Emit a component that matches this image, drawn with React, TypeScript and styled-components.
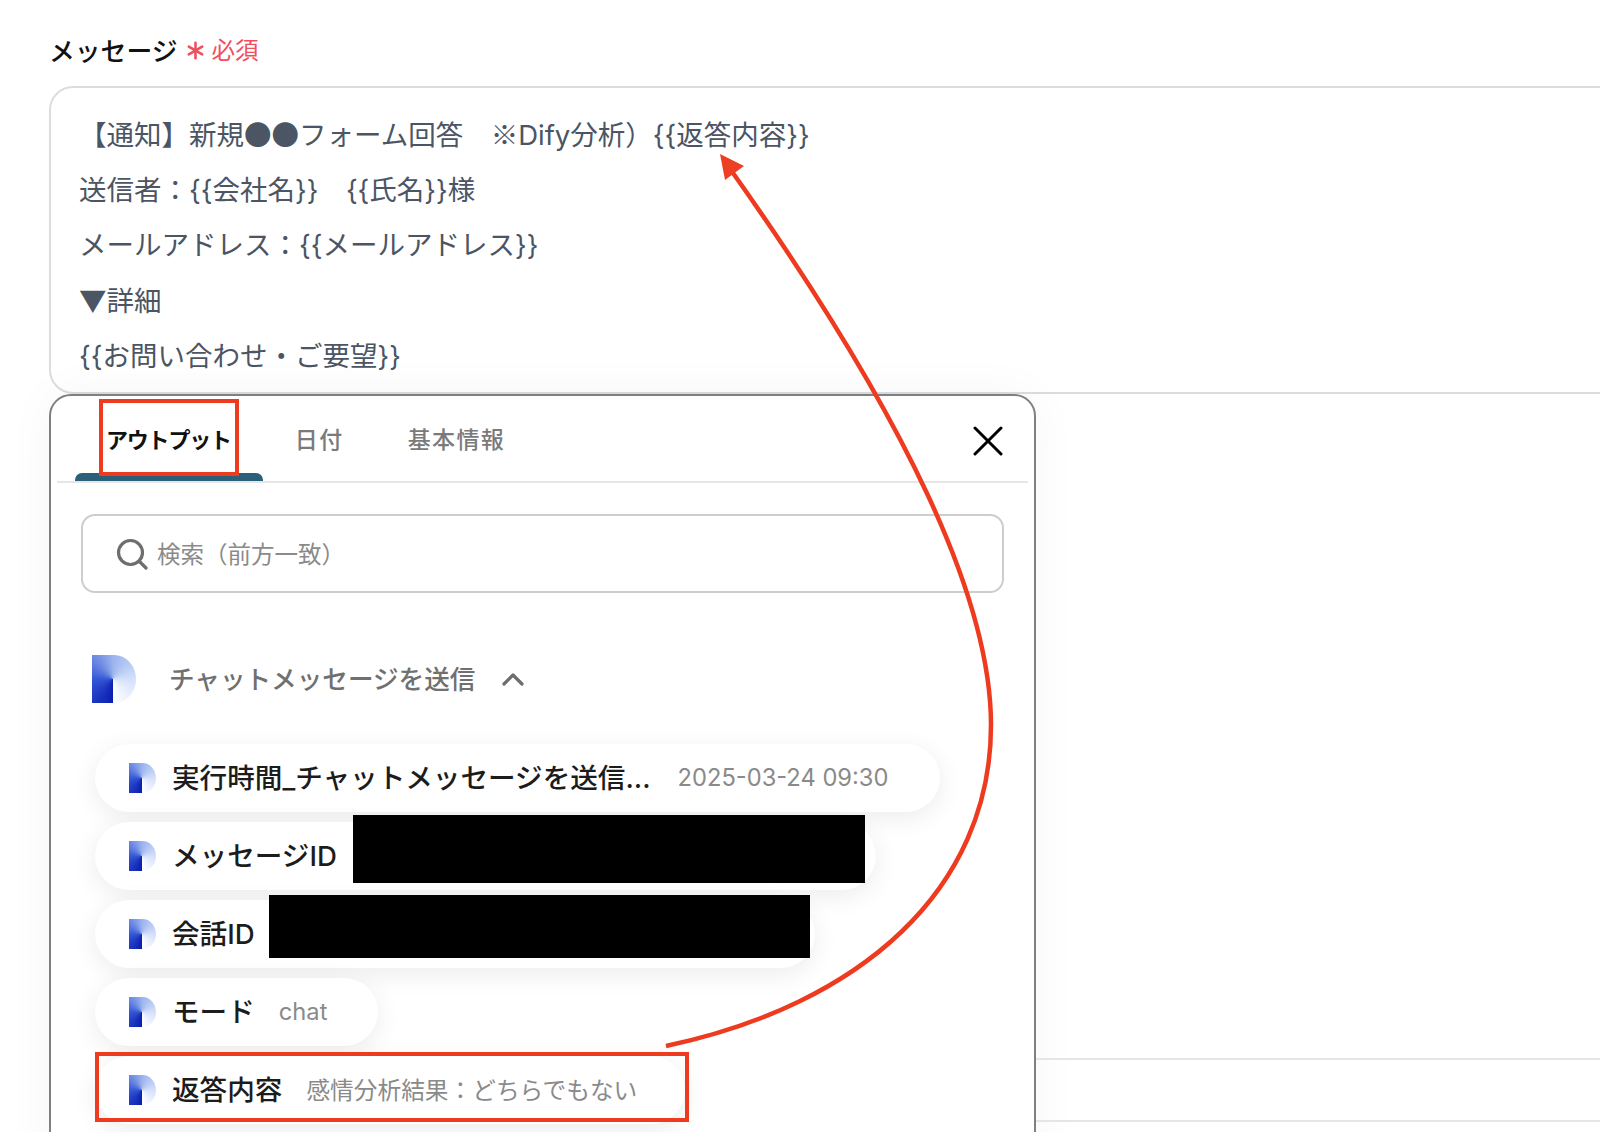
import React from "react";
import styled, { createGlobalStyle } from "styled-components";
import { Asterisk } from "lucide-react";

const Global = createGlobalStyle`
  html, body { margin: 0; padding: 0; background: #fff; }
  body { font-family: Inter, "Noto Sans CJK JP", sans-serif; }
`;

const Page = styled.div`
  position: relative;
  width: 1600px;
  height: 1132px;
  overflow: hidden;
  padding: 31px 0 0 49px;
  box-sizing: border-box;
`;

const FieldLabel = styled.div`
  display: flex;
  align-items: center;
  height: 36px;
  margin-bottom: 19px;
  font-size: 25.8px;
  font-weight: 500;
  color: #111;
`;

const Required = styled.span`
  display: inline-flex;
  align-items: center;
  margin-left: 3px;
  font-size: 23.5px;
  font-weight: 400;
  color: #ef4f5e;
  svg {
    margin-top: 3px;
  }
`;

const MessageBox = styled.div`
  width: 1650px;
  height: 308px;
  box-sizing: border-box;
  border: 2px solid #d9dce1;
  border-radius: 24px;
  padding: 20px 0 0 28px;
  font-size: 27.5px;
  line-height: 55.2px;
  color: #4b5563;
  white-space: pre;
`;

const CjkGlyph = styled.span`
  font-family: "Noto Sans CJK JP", sans-serif;
  line-height: 0;
`;

const LowerRow = styled.div`
  display: flex;
`;

const Popup = styled.div`
  flex: none;
  width: 987px;
  height: 800px;
  box-sizing: border-box;
  border: 2px solid #808080;
  border-radius: 22px;
  padding: 0 6px;
  background: #fff;
  box-shadow: 0 0 50px rgba(0, 0, 0, 0.04);
`;

const BehindRows = styled.div`
  flex: 1;
  margin-top: 664px;
  height: 60px;
  border-top: 2px solid #e5e5e5;
  border-bottom: 2px solid #e5e5e5;
`;

const TabBar = styled.div`
  display: flex;
  align-items: stretch;
  height: 85px;
  padding-left: 18px;
  border-bottom: 2px solid #e6e6e6;
`;

const Tab = styled.div<{ $active?: boolean }>`
  position: relative;
  display: flex;
  align-items: center;
  padding: ${(p) => (p.$active ? "0 32px 2px 31px" : "0 32px 2px")};
  font-size: ${(p) => (p.$active ? 22 : 23)}px;
  font-weight: ${(p) => (p.$active ? 600 : 500)};
  color: ${(p) => (p.$active ? "#111" : "#7a7a7a")};
  letter-spacing: ${(p) => (p.$active ? "-1.2px" : "1.4px")};
  ${(p) =>
    p.$active &&
    `&::after {
      content: "";
      position: absolute;
      left: 0;
      right: 0;
      bottom: 0;
      height: 8px;
      border-radius: 7px 7px 0 0;
      background: #2a6079;
    }`}
`;

const TabHighlight = styled.span`
  position: absolute;
  z-index: 2;
  left: 24px;
  top: 3px;
  width: 140px;
  height: 77px;
  box-sizing: border-box;
  border: 4px solid #ee3b1f;
`;

const CloseButton = styled.div`
  margin: 5px 25px 0 auto;
  align-self: center;
  height: 30px;
  line-height: 0;
`;

const SearchBox = styled.div`
  display: flex;
  align-items: center;
  gap: 9px;
  width: 923px;
  height: 79px;
  box-sizing: border-box;
  margin: 31px 0 0 24px;
  padding: 0 0 0 33px;
  border: 2px solid #cdcdcd;
  border-radius: 14px;
  font-size: 23.5px;
  color: #8a8a8a;
`;

const Placeholder = styled.span`
  padding-bottom: 2px;
`;

const GroupRow = styled.div`
  display: flex;
  align-items: center;
  height: 48px;
  margin: 62px 0 0 35px;
`;

const GroupTitle = styled.div`
  margin-left: 33px;
  padding-bottom: 4px;
  font-size: 25.6px;
  font-weight: 500;
  color: #707070;
`;

const Chevron = styled.div`
  margin-left: 27px;
  line-height: 0;
`;

const Logo = styled.div<{ $w: number; $h: number }>`
  flex: none;
  width: ${(p) => p.$w}px;
  height: ${(p) => p.$h}px;
  border-radius: 0 50% 50% 0 / 0 50% 50% 0;
  background: conic-gradient(
    from 180deg at 47% 50%,
    #0a1db0 0%,
    #3558d6 25%,
    #9ab2ee 50%,
    #d4e0fa 75%,
    #ffffff 100%
  );
`;

const PillList = styled.div`
  display: flex;
  flex-direction: column;
  align-items: flex-start;
  gap: 10px;
  margin: 41px 0 0 38px;
`;

const Pill = styled.div<{ $width: number }>`
  position: relative;
  display: flex;
  align-items: center;
  width: ${(p) => p.$width}px;
  height: 68px;
  box-sizing: border-box;
  padding-left: 34px;
  border-radius: 34px;
  background: #fff;
  box-shadow: 0 6px 26px rgba(0, 0, 0, 0.08);
`;

const PillLabel = styled.span`
  margin-left: 16px;
  padding-bottom: 4px;
  font-size: 27.6px;
  font-weight: 500;
  color: #1c1c1c;
  white-space: nowrap;
`;

const PillValue = styled.span<{ $gap?: number }>`
  margin-left: ${(p) => p.$gap ?? 24}px;
  padding-bottom: 2px;
  font-size: 23.7px;
  color: #8a8a8a;
  white-space: nowrap;
`;

const Redaction = styled.div<{ $left: number; $top: number; $width: number; $height: number }>`
  position: absolute;
  left: ${(p) => p.$left}px;
  top: ${(p) => p.$top}px;
  width: ${(p) => p.$width}px;
  height: ${(p) => p.$height}px;
  background: #000;
`;

const PillHighlight = styled.span`
  position: absolute;
  left: 0;
  top: -4px;
  width: 594px;
  height: 70px;
  box-sizing: border-box;
  border: 4px solid #ee3b1f;
`;

const ArrowLayer = styled.svg`
  position: absolute;
  left: 0;
  top: 0;
  pointer-events: none;
`;

export default function App() {
  return (
    <>
      <Global />
      <Page lang="ja">
        <FieldLabel>
          メッセージ
          <Required>
            <Asterisk size={31} strokeWidth={2} />
            必須
          </Required>
        </FieldLabel>
        <MessageBox>
          【通知】新規<CjkGlyph>●●</CjkGlyph>フォーム回答　<CjkGlyph>※</CjkGlyph>Dify分析）{"{{返答内容}}"}
          {"\n"}送信者：{"{{会社名}}"}　{"{{氏名}}"}様
          {"\n"}メールアドレス：{"{{メールアドレス}}"}
          {"\n"}<CjkGlyph>▼</CjkGlyph>詳細
          {"\n"}{"{{お問い合わせ・ご要望}}"}
        </MessageBox>
        <LowerRow>
          <Popup>
            <TabBar>
              <Tab $active>
                アウトプット
                <TabHighlight />
              </Tab>
              <Tab>日付</Tab>
              <Tab>基本情報</Tab>
              <CloseButton>
                <svg width="30" height="30" viewBox="0 0 30 30" stroke="#000" strokeWidth="3" strokeLinecap="round">
                  <path d="M2 2 L28 28 M28 2 L2 28" />
                </svg>
              </CloseButton>
            </TabBar>
            <SearchBox>
              <svg width="32" height="32" viewBox="0 0 32 32" fill="none" stroke="#6e6e6e" strokeWidth="3.2" strokeLinecap="round">
                <circle cx="14.5" cy="14.5" r="12" />
                <path d="M24 24 L30 30" />
              </svg>
              <Placeholder>検索（前方一致）</Placeholder>
            </SearchBox>
            <GroupRow>
              <Logo $w={44} $h={48} />
              <GroupTitle>チャットメッセージを送信</GroupTitle>
              <Chevron>
                <svg width="22" height="14" viewBox="0 0 22 14" fill="none" stroke="#6e6e6e" strokeWidth="3.2" strokeLinecap="round" strokeLinejoin="round">
                  <path d="M2 12 L11 3 L20 12" />
                </svg>
              </Chevron>
            </GroupRow>
            <PillList>
              <Pill $width={845}>
                <Logo $w={27} $h={30} />
                <PillLabel>実行時間_チャットメッセージを送信...</PillLabel>
                <PillValue $gap={27}>2025-03-24 09:30</PillValue>
              </Pill>
              <Pill $width={781}>
                <Logo $w={27} $h={30} />
                <PillLabel>メッセージID</PillLabel>
                <Redaction $left={258} $top={-7} $width={512} $height={68} />
              </Pill>
              <Pill $width={720}>
                <Logo $w={27} $h={30} />
                <PillLabel>会話ID</PillLabel>
                <Redaction $left={174} $top={-5} $width={541} $height={63} />
              </Pill>
              <Pill $width={283}>
                <Logo $w={27} $h={30} />
                <PillLabel>モード</PillLabel>
                <PillValue>chat</PillValue>
              </Pill>
              <Pill $width={590}>
                <Logo $w={27} $h={30} />
                <PillLabel>返答内容</PillLabel>
                <PillValue>感情分析結果：どちらでもない</PillValue>
                <PillHighlight />
              </Pill>
            </PillList>
          </Popup>
          <BehindRows />
        </LowerRow>
        <ArrowLayer width="1600" height="1132" viewBox="0 0 1600 1132">
          <path
            d="M666 1046 C860 1005 991 890 991 725 C991 600 908 420 733 173"
            fill="none"
            stroke="#ee3b1f"
            strokeWidth="4.5"
          />
          <polygon points="720,154 744,166 725,180" fill="#ee3f24" />
        </ArrowLayer>
      </Page>
    </>
  );
}
